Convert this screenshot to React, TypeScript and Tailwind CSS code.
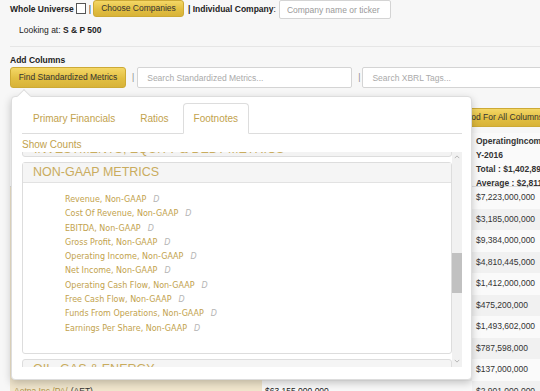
const ITEMS = [
  'Revenue, Non-GAAP',
  'Cost Of Revenue, Non-GAAP',
  'EBITDA, Non-GAAP',
  'Gross Profit, Non-GAAP',
  'Operating Income, Non-GAAP',
  'Net Income, Non-GAAP',
  'Operating Cash Flow, Non-GAAP',
  'Free Cash Flow, Non-GAAP',
  'Funds From Operations, Non-GAAP',
  'Earnings Per Share, Non-GAAP',
];

const ROWS = [
  { name: 'Agilent Technologies Inc', ticker: 'A', total: '$4,202,000,000', op: '$7,223,000,000' },
  { name: 'American Airlines Group', ticker: 'AAL', total: '$40,180,000,000', op: '$3,185,000,000' },
  { name: 'Advance Auto Parts Inc', ticker: 'AAP', total: '$9,567,679,000', op: '$9,384,000,000' },
  { name: 'Apple Inc', ticker: 'AAPL', total: '$215,639,000,000', op: '$4,810,445,000' },
  { name: 'AbbVie Inc', ticker: 'ABBV', total: '$25,638,000,000', op: '$1,412,000,000' },
  { name: 'AmerisourceBergen Corp', ticker: 'ABC', total: '$146,849,686,000', op: '$475,200,000' },
  { name: 'Abbott Laboratories', ticker: 'ABT', total: '$20,853,000,000', op: '$1,493,602,000' },
  { name: 'Accenture plc', ticker: 'ACN', total: '$34,797,661,000', op: '$787,598,000' },
  { name: 'Adobe Systems Inc', ticker: 'ADBE', total: '$5,854,430,000', op: '$137,000,000' },
  { name: 'Aetna Inc /PA/', ticker: 'AET', total: '$63,155,000,000', op: '$2,901,000,000' },
];

const goldButton =
  'rounded-[3px] border border-[#cdaa35] bg-[linear-gradient(180deg,#f4d766_0%,#e2bf42_55%,#d8b338_100%)] text-[#333] leading-none whitespace-nowrap';

function Tab({ label, active }: { label: string; active?: boolean }) {
  return (
    <div
      className={
        active
          ? 'mr-[3px] -mb-px flex h-[31px] items-center rounded-t-[4px] border border-b-white border-[#ddd] bg-white px-[10px] text-[#c2a24d]'
          : 'mr-[3px] flex h-[30px] items-center px-[11px] text-[#c2a24d]'
      }
    >
      {label}
    </div>
  );
}

export default function App() {
  return (
    <div className="relative h-[391px] w-[540px] overflow-hidden bg-[#f7f7f7] font-['Liberation_Sans',Arial,sans-serif] text-[8.5px] text-[#222]">
      {/* top filter row */}
      <div className="flex h-[19px] items-start pl-[10px]">
        <span className="mt-[4px] font-bold leading-[10px]">Whole Universe</span>
        <span className="ml-[2px] mt-[3px] h-[11px] w-[10px] border border-[#555] bg-white" />
        <span className="ml-[3px] mt-[4px] leading-[10px]">|</span>
        <button className={`${goldButton} ml-[2px] h-[17px] w-[91px] text-[8.5px]`}>
          Choose Companies
        </button>
        <span className="ml-[4px] mt-[4px] font-bold leading-[10px]">| Individual Company</span>
        <span className="mt-[4px] leading-[10px]">:</span>
        <input
          readOnly
          placeholder="Company name or ticker"
          className="ml-[3px] h-[19px] w-[112px] rounded-[2px] border border-[#d4d4d4] bg-white px-[7px] text-[8.5px] placeholder:text-[#999] outline-none"
        />
      </div>

      <div className="mt-[5px] pl-[19px] leading-[12px]">
        Looking at: <span className="font-bold">S &amp; P 500</span>
      </div>

      <div className="ml-[10px] mt-[10px] border-t border-[#e6e6e6]" />

      <div className="mt-[7px] pl-[10px] font-bold leading-[12px]">Add Columns</div>

      <div className="mt-[1px] flex h-[21px] items-center pl-[10px]">
        <button className={`${goldButton} h-[21px] w-[116px] shrink-0 text-[8.5px]`}>
          Find Standardized Metrics
        </button>
        <span className="ml-[6px] text-[#888]">|</span>
        <input
          readOnly
          placeholder="Search Standardized Metrics..."
          className="ml-[3px] h-[21px] w-[215px] shrink-0 rounded-[2px] border border-[#d4d4d4] bg-white px-[9px] text-[8.5px] placeholder:text-[#aaa] outline-none"
        />
        <span className="ml-[6px] text-[#888]">|</span>
        <input
          readOnly
          placeholder="Search XBRL Tags..."
          className="ml-[2px] h-[21px] w-[200px] shrink-0 rounded-[2px] border border-[#d4d4d4] bg-white px-[9px] text-[8.5px] placeholder:text-[#aaa] outline-none"
        />
      </div>

      {/* results table behind the popover */}
      <div className="mt-[20px] flex h-[19px] pl-[432px]">
        <button className={`${goldButton} h-[19px] shrink-0 px-[8px] text-[8.5px]`}>
          Set Period For All Columns
        </button>
      </div>

      <div className="mt-[6px] flex w-[700px] pl-[10px]">
        <div className="w-[252px] shrink-0">
          <div className="h-[54px] border-b border-[#ddd] bg-white px-[4px] pt-[4px] font-bold">Company</div>
          {ROWS.map((r) => (
            <div key={r.ticker} className="flex h-[21.5px] items-center bg-[#f1e6cd] px-[4px]">
              <span className="text-[#b0924a]">{r.name}</span>
              <span className="ml-[3px] text-[#333]">({r.ticker})</span>
            </div>
          ))}
        </div>
        <div className="w-[210px] shrink-0">
          <div className="h-[54px] border-b border-[#ddd] bg-white px-[3px] pt-[4px] font-bold">Revenues</div>
          {ROWS.map((r, i) => (
            <div
              key={r.ticker}
              className={`flex h-[21.5px] items-center px-[3px] ${i % 2 ? 'bg-[#f9f9f9]' : 'bg-[#f1f1f1]'}`}
            >
              {r.total}
            </div>
          ))}
        </div>
        <div className="w-[150px] shrink-0">
          <div className="h-[54px] whitespace-nowrap border-b border-[#ddd] bg-[#fafafa] px-[4px] pt-[1px] font-bold leading-[14px] text-[#333]">
            <div>OperatingIncomeLoss</div>
            <div>Y-2016</div>
            <div>Total : $1,402,894,612,000</div>
            <div>Average : $2,811,412,000</div>
          </div>
          {ROWS.map((r, i) => (
            <div
              key={r.ticker}
              className={`flex h-[21.5px] items-center px-[4px] text-[#333] ${i % 2 ? 'bg-[#f1f1f1]' : 'bg-[#fafafa]'}`}
            >
              {r.op}
            </div>
          ))}
        </div>
      </div>

      {/* metrics popover */}
      <div className="absolute left-[11px] top-[96px] h-[284px] w-[461px] rounded-[4px] border border-[#ddd] bg-white pl-[10px] pr-[9px] pt-[6px] shadow-[0_3px_8px_rgba(0,0,0,0.22)]">
        <div className="absolute -top-[6px] left-[7px] h-[10px] w-[10px] rotate-45 border-l border-t border-[#ddd] bg-white" />

        <div className="flex h-[31px] items-end border-b border-[#ddd] text-[10px]">
          <Tab label="Primary Financials" />
          <Tab label="Ratios" />
          <Tab label="Footnotes" active />
        </div>

        <div className="mt-[5px] text-[10px] leading-[11px] text-[#c2a24d]">Show Counts</div>

        <div className="mt-[2px] flex h-[215px]">
          <div className="h-full w-[430px] overflow-hidden">
            <div className="-mt-[15px] flex h-[20px] items-end whitespace-nowrap rounded-[3px] border border-[#ddd] bg-[#f3f3f3] px-[11px] text-[12.5px] leading-[13px] text-[#c9ac5e]">
              INVESTMENTS, EQUITY &amp; DEBT METRICS
            </div>

            <div className="mt-[5px] rounded-[3px] border border-[#ddd]">
              <div className="h-[20px] border-b border-[#e2e2e2] bg-[#f5f5f5] px-[10px] text-[12.5px] leading-[18px] text-[#c9ac5e]">
                NON-GAAP METRICS
              </div>
              <div className="pb-[17px] pl-[42px] pt-[10px] font-['DejaVu_Sans',Verdana,sans-serif] text-[8px] leading-[14.3px]">
                {ITEMS.map((item) => (
                  <div key={item} className="flex">
                    <span className="text-[#c2a24d]">{item}</span>
                    <span className="ml-[7px] italic text-[#b5b5b5]">D</span>
                  </div>
                ))}
              </div>
            </div>

            <div className="mt-[5px] h-[20px] rounded-[3px] border border-[#ddd] bg-[#f5f5f5] px-[10px] text-[12.5px] leading-[18px] text-[#c9ac5e]">
              OIL, GAS &amp; ENERGY
            </div>
          </div>

          <div className="flex h-full w-[10px] flex-col bg-[#f1f1f1]">
            <div className="flex h-[10px] items-center justify-center">
              <svg viewBox="0 0 8 5" className="h-[4px] w-[6px]" fill="none" aria-hidden="true">
                <path d="M1 4L4 1L7 4" stroke="#a3a3a3" strokeWidth="1" />
              </svg>
            </div>
            <div className="mt-[91px] h-[40px] w-full bg-[#c1c1c1]" />
            <div className="flex-1" />
            <div className="flex h-[12px] items-center justify-center">
              <svg viewBox="0 0 8 5" className="h-[4px] w-[6px]" fill="none" aria-hidden="true">
                <path d="M1 1L4 4L7 1" stroke="#a3a3a3" strokeWidth="1" />
              </svg>
            </div>
          </div>
        </div>
      </div>
    </div>
  );
}
